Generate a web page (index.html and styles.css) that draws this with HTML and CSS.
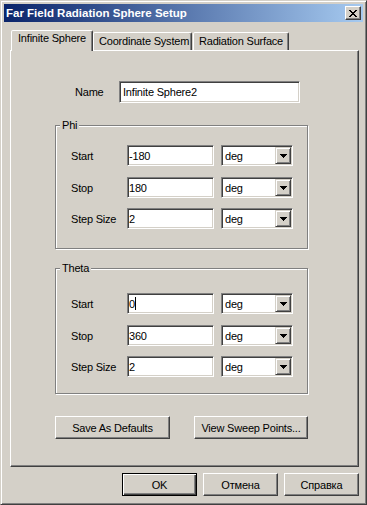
FILE: index.html
```html
<!DOCTYPE html>
<html lang="en">
<head>
    <meta charset="UTF-8">
    <meta name="viewport" content="width=device-width, initial-scale=1.0">
    <title>Far Field Radiation Sphere Setup</title>
    <link rel="stylesheet" href="styles.css">
</head>
<body>
    <div class="window">
        <div class="titlebar">
            <span class="title">Far Field Radiation Sphere Setup</span>
            <div class="close-btn">
                <svg width="8" height="7" viewBox="0 0 8 7" shape-rendering="crispEdges">
                    <path d="M0 0h2v1h-2z M6 0h2v1h-2z M1 1h2v1h-2z M5 1h2v1h-2z M2 2h4v1h-4z M3 3h2v1h-2z M2 4h4v1h-4z M1 5h2v1h-2z M5 5h2v1h-2z M0 6h2v1h-2z M6 6h2v1h-2z" fill="#000"/>
                </svg>
            </div>
        </div>

        <div class="tabs">
            <div class="tab active">Infinite Sphere</div>
            <div class="tab tab-coord">Coordinate System</div>
            <div class="tab tab-surface">Radiation Surface</div>
        </div>

        <div class="panel">
            <div class="name-row">
                <span class="label name-label">Name</span>
                <div class="field name-field">Infinite Sphere2</div>
            </div>

            <div class="group phi">
                <div class="group-title">Phi</div>
                <div class="row">
                    <span class="label">Start</span>
                    <div class="field">-180</div>
                    <div class="combo"><span class="combo-text">deg</span><span class="drop"><svg width="7" height="4" viewBox="0 0 7 4" shape-rendering="crispEdges"><path d="M0 0h7v1h-7z M1 1h5v1h-5z M2 2h3v1h-3z M3 3h1v1h-1z" fill="#000"/></svg></span></div>
                </div>
                <div class="row">
                    <span class="label">Stop</span>
                    <div class="field">180</div>
                    <div class="combo"><span class="combo-text">deg</span><span class="drop"><svg width="7" height="4" viewBox="0 0 7 4" shape-rendering="crispEdges"><path d="M0 0h7v1h-7z M1 1h5v1h-5z M2 2h3v1h-3z M3 3h1v1h-1z" fill="#000"/></svg></span></div>
                </div>
                <div class="row">
                    <span class="label">Step Size</span>
                    <div class="field">2</div>
                    <div class="combo"><span class="combo-text">deg</span><span class="drop"><svg width="7" height="4" viewBox="0 0 7 4" shape-rendering="crispEdges"><path d="M0 0h7v1h-7z M1 1h5v1h-5z M2 2h3v1h-3z M3 3h1v1h-1z" fill="#000"/></svg></span></div>
                </div>
            </div>

            <div class="group theta">
                <div class="group-title">Theta</div>
                <div class="row">
                    <span class="label">Start</span>
                    <div class="field">0<span class="caret"></span></div>
                    <div class="combo"><span class="combo-text">deg</span><span class="drop"><svg width="7" height="4" viewBox="0 0 7 4" shape-rendering="crispEdges"><path d="M0 0h7v1h-7z M1 1h5v1h-5z M2 2h3v1h-3z M3 3h1v1h-1z" fill="#000"/></svg></span></div>
                </div>
                <div class="row">
                    <span class="label">Stop</span>
                    <div class="field">360</div>
                    <div class="combo"><span class="combo-text">deg</span><span class="drop"><svg width="7" height="4" viewBox="0 0 7 4" shape-rendering="crispEdges"><path d="M0 0h7v1h-7z M1 1h5v1h-5z M2 2h3v1h-3z M3 3h1v1h-1z" fill="#000"/></svg></span></div>
                </div>
                <div class="row">
                    <span class="label">Step Size</span>
                    <div class="field">2</div>
                    <div class="combo"><span class="combo-text">deg</span><span class="drop"><svg width="7" height="4" viewBox="0 0 7 4" shape-rendering="crispEdges"><path d="M0 0h7v1h-7z M1 1h5v1h-5z M2 2h3v1h-3z M3 3h1v1h-1z" fill="#000"/></svg></span></div>
                </div>
            </div>

            <div class="actions">
                <button class="btn btn-save">Save As Defaults</button>
                <button class="btn btn-sweep">View Sweep Points...</button>
            </div>
        </div>

        <div class="footer">
            <button class="btn btn-footer default">OK</button>
            <button class="btn btn-footer">Отмена</button>
            <button class="btn btn-footer">Справка</button>
        </div>
    </div>
</body>
</html>
```

FILE: styles.css
```css
* {
    box-sizing: border-box;
}
body {
    margin: 0;
    font-family: "Liberation Sans", Arial, sans-serif;
    font-size: 11px;
    letter-spacing: -0.2px;
    color: #000;
    background-color: #d4d0c8;
}
.window {
    width: 367px;
    height: 505px;
    background-color: #d4d0c8;
    border: 1px solid;
    border-color: #d4d0c8 #404040 #404040 #d4d0c8;
    box-shadow: inset 1px 1px 0 #fff, inset -1px -1px 0 #808080;
    padding: 3px;
    display: flex;
    flex-direction: column;
}

/* title bar */
.titlebar {
    height: 18px;
    display: flex;
    align-items: center;
    justify-content: space-between;
    padding: 0 2px;
    background: linear-gradient(to right, #0a246a, #a6caf0);
    color: #fff;
}
.title {
    font-weight: bold;
    font-size: 11.5px;
    letter-spacing: 0;
}
.close-btn {
    width: 16px;
    height: 14px;
    display: flex;
    align-items: center;
    justify-content: center;
    background-color: #d4d0c8;
    border: 1px solid;
    border-color: #fff #404040 #404040 #fff;
    box-shadow: inset -1px -1px 0 #808080;
}

/* tabs */
.tabs {
    display: flex;
    align-items: flex-end;
    padding: 8px 0 0 7px;
}
.tab {
    height: 18px;
    padding: 2px 0 0 5px;
    line-height: 13px;
    white-space: nowrap;
    overflow: hidden;
    border: 1px solid;
    border-bottom: none;
    border-color: #fff #404040 transparent #fff;
    box-shadow: inset -1px 0 0 #808080;
    border-radius: 2px 2px 0 0;
    background-color: #d4d0c8;
}
.tab.active {
    width: 82px;
    height: 21px;
    margin-bottom: -1px;
    padding: 1px 0 0 6px;
    position: relative;
    z-index: 1;
}
.tab-coord {
    width: 99px;
}
.tab-surface {
    width: 96px;
    margin-left: 1px;
}

/* tab page */
.panel {
    width: 349px;
    height: 417px;
    margin-left: 6px;
    border: 1px solid;
    border-color: #fff #404040 #404040 #fff;
    box-shadow: inset -1px -1px 0 #808080;
    padding: 30px 0 0 44px;
}
.name-row {
    display: flex;
    align-items: center;
    padding-left: 20px;
    height: 22px;
}
.label {
    width: 56px;
    flex-shrink: 0;
}
.name-label {
    width: 44px;
}
.field {
    width: 87px;
    height: 21px;
    display: flex;
    align-items: center;
    padding: 0 1px;
    background-color: #fff;
    border: 1px solid;
    border-color: #808080 #fff #fff #808080;
    box-shadow: inset 1px 1px 0 #404040, inset -1px -1px 0 #d4d0c8;
    white-space: nowrap;
}
.name-field {
    width: 181px;
    height: 22px;
    padding: 0 3px;
}
.caret {
    width: 1px;
    height: 13px;
    background-color: #000;
}

/* group boxes */
.group {
    width: 253px;
    border: 1px solid #808080;
    box-shadow: inset 1px 1px 0 #fff, 1px 1px 0 #fff;
    padding-left: 15px;
}
.group-title {
    width: fit-content;
    margin: -7px 0 0 -11px;
    padding: 0 2px;
    line-height: 13px;
    background-color: #d4d0c8;
}
.row {
    display: flex;
    align-items: center;
    height: 21px;
    margin-top: 10px;
}
.group-title + .row + .row {
    margin-top: 11px;
}
.phi {
    margin-top: 22px;
    padding-bottom: 19px;
}
.phi .group-title + .row {
    margin-top: 13px;
}
.theta {
    margin-top: 19px;
    padding-bottom: 16px;
}
.theta .group-title + .row {
    margin-top: 18px;
}
.combo {
    width: 72px;
    height: 21px;
    margin-left: 7px;
    display: flex;
    align-items: center;
    justify-content: space-between;
    padding: 1px;
    background-color: #fff;
    border: 1px solid;
    border-color: #808080 #fff #fff #808080;
    box-shadow: inset 1px 1px 0 #404040, inset -1px -1px 0 #d4d0c8;
}
.combo-text {
    margin-left: 2px;
}
.drop {
    width: 16px;
    height: 17px;
    display: flex;
    align-items: center;
    justify-content: center;
    background-color: #d4d0c8;
    border: 1px solid;
    border-color: #d4d0c8 #404040 #404040 #d4d0c8;
    box-shadow: inset 1px 1px 0 #fff, inset -1px -1px 0 #808080;
}

/* buttons */
.btn {
    height: 23px;
    padding: 0;
    font-family: inherit;
    font-size: 11px;
    letter-spacing: -0.2px;
    color: #000;
    background-color: #d4d0c8;
    border: 1px solid;
    border-color: #fff #404040 #404040 #fff;
    box-shadow: inset -1px -1px 0 #808080;
    border-radius: 0;
}
.btn.default {
    border-color: #000;
    box-shadow: inset 1px 1px 0 #fff, inset -1px -1px 0 #404040, inset -2px -2px 0 #808080;
}
.actions {
    display: flex;
    margin-top: 22px;
}
.btn-save {
    width: 115px;
}
.btn-sweep {
    width: 114px;
    margin-left: 24px;
}
.footer {
    display: flex;
    justify-content: flex-end;
    gap: 6px;
    margin: 6px 4px 0 0;
}
.btn-footer {
    width: 75px;
}
```
